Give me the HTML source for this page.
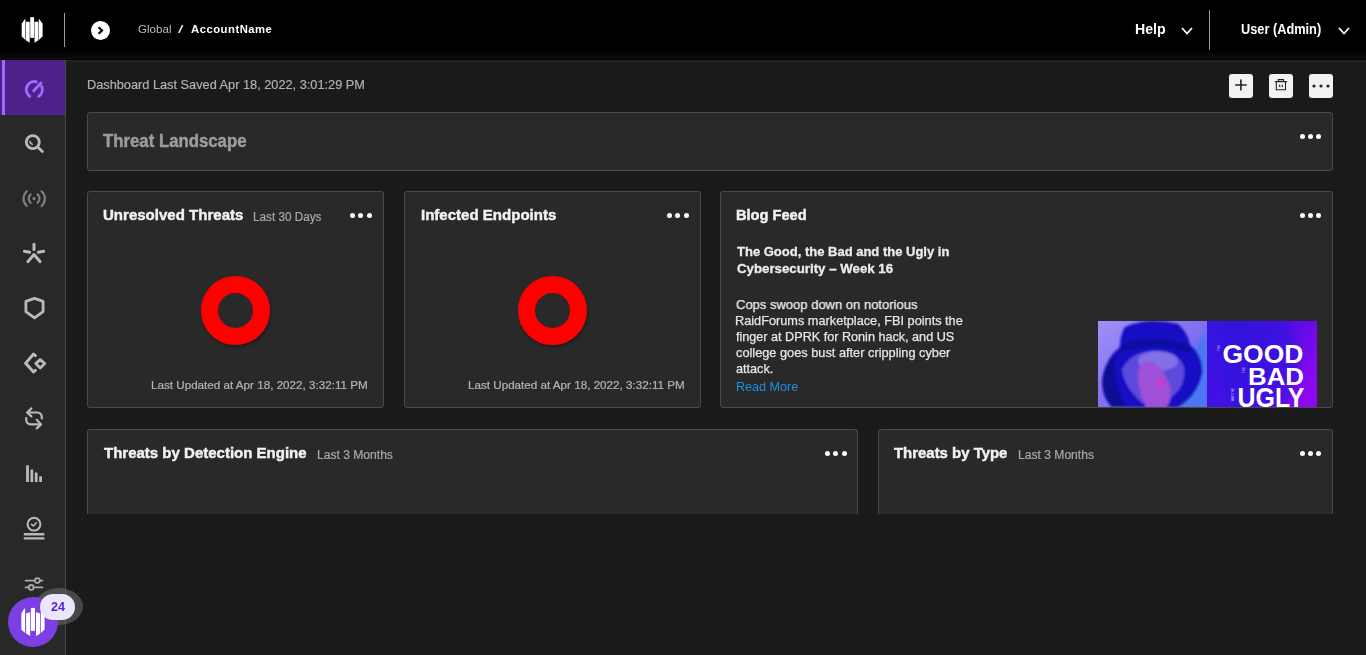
<!DOCTYPE html>
<html><head><meta charset="utf-8">
<style>
*{margin:0;padding:0;box-sizing:border-box}
html,body{width:1366px;height:655px;overflow:hidden;background:#1a1a1a;font-family:"Liberation Sans",sans-serif}
.a{position:absolute}
.t{position:absolute;white-space:nowrap;line-height:1}
#hdr{left:0;top:0;width:1366px;height:60px;background:linear-gradient(#000 0,#000 51px,#0c0c0c 58.5px,#000 59px,#000 60px)}
#side{left:0;top:60px;width:66px;height:595px;background:#282828;border-right:1px solid #4a4a4a}
#act{left:0;top:60px;width:65px;height:55px;background:#4e2189}
#stripe{left:2px;top:60px;width:3px;height:55px;background:#9b6cff}
.card{position:absolute;background:#292929;border:1px solid #4a4a4a;border-radius:3px}
.dots{position:absolute;width:22px;height:6px}
.dots i{position:absolute;top:0;width:5px;height:5px;border-radius:50%;background:#fff}
.dots i:nth-child(1){left:0}.dots i:nth-child(2){left:8.3px}.dots i:nth-child(3){left:16.8px}
.btn{position:absolute;top:74px;width:24px;height:24px;background:#f2f2f2;border-radius:3px}
.h16{font-size:15.5px;font-weight:bold;color:#f2f2f2;-webkit-text-stroke:.45px #f2f2f2}
.sub{font-size:12px;color:#a8a8a8;-webkit-text-stroke:.2px #a8a8a8}
.donut{position:absolute;width:69px;height:69px;border-radius:50%;border:17px solid #ff0000;box-shadow:1px 2px 3px rgba(0,0,0,.35)}
.upd{font-size:11px;color:#b4b4b4;-webkit-text-stroke:.2px #b4b4b4}
</style></head><body>
<div id="hdr" class="a"></div>
<!-- logo -->
<svg class="a" style="left:18px;top:14px" width="30" height="32" viewBox="18 14 30 32">
 <g fill="#fff">
  <polygon points="21.7,23.8 25.3,18.4 25.3,39.9 21.7,36.5"/>
  <polygon points="25.8,21.8 29.7,21.8 29.7,42.8 25.8,40.2"/>
  <polygon points="30.2,17.2 34.1,17.2 34.1,37.9 30.2,37.9"/>
  <polygon points="34.5,21.8 38.4,21.8 38.4,40.2 34.5,42.8"/>
  <polygon points="38.8,18.4 42.6,23.8 42.6,36.5 38.8,39.9"/>
 </g>
</svg>
<div class="a" style="left:64px;top:13px;width:1px;height:34px;background:#9a9a9a"></div>
<div class="a" style="left:91px;top:21px;width:19px;height:19px;border-radius:50%;background:#fff"></div>
<svg class="a" style="left:91px;top:21px" width="19" height="19" viewBox="0 0 19 19"><polyline points="7.6,6.2 11,9.5 7.6,12.8" fill="none" stroke="#000" stroke-width="2.2"/></svg>
<div class="t" id="tGlobal" style="left:137.5px;top:23.8px;font-size:11px;color:#bcbcbc;transform:scaleX(1.054);transform-origin:0 0">Global</div>
<svg class="a" style="left:176px;top:22px" width="10" height="14" viewBox="0 0 10 14"><path d="M6.6 3 L2.8 11" stroke="#fff" stroke-width="1.5"/></svg>
<div class="t" id="tAcct" style="left:190.5px;top:23.8px;font-size:11px;color:#fff;font-weight:bold;letter-spacing:.5px;transform:scaleX(1.024);transform-origin:0 0">AccountName</div>
<div class="t" id="tHelp" style="left:1134.5px;top:21.0px;font-size:15px;color:#fff;font-weight:bold;transform:scaleX(0.940);transform-origin:0 0">Help</div>
<svg class="a" style="left:1180px;top:25px" width="14" height="12" viewBox="0 0 14 12"><polyline points="2,3 7,8.5 12,3" fill="none" stroke="#fff" stroke-width="1.8"/></svg>
<div class="a" style="left:1209px;top:10px;width:1px;height:40px;background:#9a9a9a"></div>
<div class="t" id="tUser" style="left:1241.0px;top:20.9px;font-size:15px;color:#fff;font-weight:bold;transform:scaleX(0.851);transform-origin:0 0">User (Admin)</div>
<svg class="a" style="left:1337px;top:25px" width="14" height="12" viewBox="0 0 14 12"><polyline points="2,3 7,8.5 12,3" fill="none" stroke="#fff" stroke-width="1.8"/></svg>

<div class="a" style="left:66px;top:60px;width:1300px;height:3px;background:linear-gradient(#252525,#1a1a1a)"></div>
<!-- sidebar -->
<div id="side" class="a"></div>
<div id="act" class="a"></div>
<div id="stripe" class="a"></div>


<!-- sidebar icons -->
<svg class="a" style="left:18px;top:72px" width="32" height="32" viewBox="0 0 32 32" fill="none" stroke="#9a6cff" stroke-width="3" stroke-linecap="round">
 <path d="M11.71 24.15 A 8.0 8.0 0 0 1 18.24 9.84"/>
 <path d="M23.72 14.60 A 8.0 8.0 0 0 1 20.89 24.15"/>
 <path d="M15.8 18.8 L23 11"/>
</svg>
<svg class="a" style="left:18px;top:127px" width="32" height="32" viewBox="0 0 32 32" fill="none" stroke="#bababa" stroke-width="2.8" stroke-linecap="round">
 <circle cx="14.8" cy="15.1" r="6.5"/>
 <path d="M20.2 20.4 L24.4 24.4"/>
 <path d="M12 14.6 Q12.4 16.4 14.2 17.2" stroke-width="1.6"/>
</svg>
<svg class="a" style="left:18px;top:182px" width="32" height="32" viewBox="0 0 32 32" fill="none" stroke="#7e7e7e" stroke-width="2.2" stroke-linecap="round">
 <path d="M8.8 9.2 A 10 10 0 0 0 8.8 24"/>
 <path d="M23.6 9.2 A 10 10 0 0 1 23.6 24"/>
 <path d="M12.6 12.4 A 5.6 5.6 0 0 0 12.6 20.8"/>
 <path d="M19.6 12.4 A 5.6 5.6 0 0 1 19.6 20.8"/>
 <circle cx="16" cy="16.6" r="1.6" fill="#7e7e7e" stroke="none"/>
</svg>
<svg class="a" style="left:18px;top:237px" width="32" height="32" viewBox="0 0 32 32" fill="none" stroke="#bababa" stroke-width="3" stroke-linecap="round" stroke-linejoin="round">
 <path d="M16 7.2 V12.4"/>
 <path d="M6.4 14.2 L11.6 15.2"/>
 <path d="M25.6 14.2 L20.4 15.2"/>
 <path d="M10 24.6 L16 17.6 L22 24.6"/>
</svg>
<svg class="a" style="left:18px;top:292px" width="32" height="32" viewBox="0 0 32 32" fill="none" stroke="#bababa" stroke-width="2.8" stroke-linejoin="round">
 <path d="M16.5 6.4 L25.1 9.4 V19.6 L16.5 25.8 L7.9 19.6 V9.4 Z"/>
</svg>
<svg class="a" style="left:18px;top:347px" width="32" height="32" viewBox="0 0 32 32" fill="none" stroke="#bababa" stroke-width="3" stroke-linejoin="round" stroke-linecap="round">
 <path d="M17.4 8.6 L15.6 7 L7.6 16.2 L15.6 25 L17.4 23.4"/>
 <path d="M22.2 12.6 L26.8 16.6 L22.2 21 L17.8 16.6 Z" stroke-width="2.8"/>
</svg>
<svg class="a" style="left:18px;top:402px" width="32" height="32" viewBox="0 0 32 32" fill="none" stroke="#bababa" stroke-width="2.2" stroke-linecap="round" stroke-linejoin="round">
 <path d="M13.4 6.4 L9.2 10.6 L13.4 14.4"/>
 <path d="M9.6 10.5 H19.4 A 4.6 4.6 0 0 1 23.8 15 V16.4"/>
 <path d="M18.8 17.8 L23 22.4 L18.8 26.4"/>
 <path d="M22.6 22.4 H12.6 A 4.6 4.6 0 0 1 8.2 17.8 V16"/>
</svg>
<svg class="a" style="left:18px;top:457px" width="32" height="32" viewBox="0 0 32 32" fill="#bababa">
 <rect x="8.1" y="8.2" width="2.8" height="16.8" rx=".6"/>
 <rect x="12.4" y="12.4" width="2.8" height="12.6" rx=".6"/>
 <rect x="16.8" y="15.4" width="2.8" height="9.6" rx=".6"/>
 <rect x="21.2" y="19.2" width="2.8" height="5.8" rx=".6"/>
</svg>
<svg class="a" style="left:18px;top:512px" width="32" height="32" viewBox="0 0 32 32" fill="none" stroke="#bababa" stroke-width="2" stroke-linecap="round">
 <circle cx="16" cy="12.2" r="6.4"/>
 <path d="M13.6 12.4 L15.4 14 L18.4 10.8" stroke-width="1.6"/>
 <path d="M6.8 22.3 H25.4 M6.8 26.4 H25.4" stroke-width="2.4"/>
</svg>
<svg class="a" style="left:18px;top:564.5px" width="32" height="32" viewBox="0 0 32 32" fill="none" stroke="#a9a9a9" stroke-width="1.8" stroke-linecap="round">
 <path d="M7.6 15.6 H24.4 M7.6 22.4 H24.4"/>
 <circle cx="19.4" cy="15.6" r="2.4" fill="#282828"/>
 <circle cx="13.2" cy="22.4" r="2.4" fill="#282828"/>
</svg>
<!-- content -->
<div class="t" id="tSaved" style="left:86.5px;top:78.3px;font-size:13px;color:#b0b0b0;-webkit-text-stroke:.2px #b0b0b0;transform:scaleX(0.981);transform-origin:0 0">Dashboard Last Saved Apr 18, 2022, 3:01:29 PM</div>
<div class="btn" style="left:1229px"></div>
<svg class="a" style="left:1229px;top:74px" width="24" height="24" viewBox="0 0 24 24"><path d="M6.2 11h11.5M11.9 5.6v11" stroke="#222" stroke-width="1.6" fill="none"/></svg>
<div class="btn" style="left:1269px"></div>
<svg class="a" style="left:1269px;top:74px" width="24" height="24" viewBox="0 0 24 24"><g fill="none" stroke="#222" stroke-width="1.05"><path d="M5.9 7.6h12M9.3 7.6V5.6h5.2v2M7.3 7.6v8.1h9.2V7.6"/></g><g fill="#222"><ellipse cx="10.7" cy="11.9" rx=".6" ry="1.3"/><ellipse cx="13.3" cy="11.9" rx=".6" ry="1.3"/></g></svg>
<div class="btn" style="left:1309px"></div>
<svg class="a" style="left:1309px;top:74px" width="24" height="24" viewBox="0 0 24 24"><g fill="#222"><circle cx="5" cy="12" r="1.6"/><circle cx="12" cy="12" r="1.6"/><circle cx="19" cy="12" r="1.6"/></g></svg>

<div class="card" style="left:87px;top:112px;width:1246px;height:59px"></div>
<div class="t" id="tTL" style="left:103.2px;top:132.9px;font-size:17.5px;font-weight:bold;color:#9c9c9c;-webkit-text-stroke:.45px #9c9c9c;transform:scaleX(0.958);transform-origin:0 0">Threat Landscape</div>
<div class="dots" style="left:1299.6px;top:133.8px"><i></i><i></i><i></i></div>

<div class="card" style="left:87px;top:191px;width:297px;height:217px"></div>
<div class="t h16" id="tUT" style="left:103.0px;top:206.7px;transform:scaleX(0.970);transform-origin:0 0">Unresolved Threats</div>
<div class="t sub" id="tL30" style="left:253.0px;top:210.8px;transform:scaleX(0.976);transform-origin:0 0">Last 30 Days</div>
<div class="dots" style="left:350.1px;top:212.7px"><i></i><i></i><i></i></div>
<div class="donut" style="left:201px;top:276px"></div>
<div class="t upd" id="tUpd1" style="left:151.0px;top:379.8px;transform:scaleX(1.059);transform-origin:0 0">Last Updated at Apr 18, 2022, 3:32:11 PM</div>

<div class="card" style="left:404px;top:191px;width:297px;height:217px"></div>
<div class="t h16" id="tIE" style="left:420.5px;top:206.7px;transform:scaleX(0.970);transform-origin:0 0">Infected Endpoints</div>
<div class="dots" style="left:667.1px;top:212.7px"><i></i><i></i><i></i></div>
<div class="donut" style="left:518px;top:276px"></div>
<div class="t upd" id="tUpd2" style="left:468.0px;top:379.8px;transform:scaleX(1.059);transform-origin:0 0">Last Updated at Apr 18, 2022, 3:32:11 PM</div>

<div class="card" style="left:720px;top:191px;width:613px;height:217px;overflow:hidden"></div>
<div class="t h16" id="tBF" style="left:736.0px;top:206.7px;transform:scaleX(0.943);transform-origin:0 0">Blog Feed</div>
<div class="dots" style="left:1299.6px;top:212.7px"><i></i><i></i><i></i></div>
<div class="t" id="tBT1" style="left:736.5px;top:245.0px;font-size:13.2px;font-weight:bold;color:#ececec;-webkit-text-stroke:.3px #ececec;transform:scaleX(0.986);transform-origin:0 0">The Good, the Bad and the Ugly in</div>
<div class="t" id="tBT2" style="left:736.5px;top:262.3px;font-size:13.2px;font-weight:bold;color:#ececec;-webkit-text-stroke:.3px #ececec;transform:scaleX(1.006);transform-origin:0 0">Cybersecurity – Week 16</div>
<div class="t" id="tBB1" style="left:736.0px;top:298.0px;font-size:13px;color:#e6e6e6;-webkit-text-stroke:.25px #e6e6e6">Cops swoop down on notorious</div>
<div class="t" id="tBB2" style="left:735.0px;top:314.0px;font-size:13px;color:#e6e6e6;-webkit-text-stroke:.25px #e6e6e6;transform:scaleX(0.979);transform-origin:0 0">RaidForums marketplace, FBI points the</div>
<div class="t" id="tBB3" style="left:736.0px;top:330.0px;font-size:13px;color:#e6e6e6;-webkit-text-stroke:.25px #e6e6e6;transform:scaleX(0.971);transform-origin:0 0">finger at DPRK for Ronin hack, and US</div>
<div class="t" id="tBB4" style="left:736.0px;top:346.0px;font-size:13px;color:#e6e6e6;-webkit-text-stroke:.25px #e6e6e6;transform:scaleX(0.982);transform-origin:0 0">college goes bust after crippling cyber</div>
<div class="t" id="tBB5" style="left:736.0px;top:362.0px;font-size:13px;color:#e6e6e6;-webkit-text-stroke:.25px #e6e6e6;transform:scaleX(0.974);transform-origin:0 0">attack.</div>
<div class="t" id="tRM" style="left:735.8px;top:380.0px;font-size:13px;color:#1a8fe6;transform:scaleX(0.968);transform-origin:0 0">Read More</div>
<svg class="a" id="blogimg" style="left:1098px;top:321px" width="219" height="86" viewBox="0 0 219 86">
 <defs>
  <linearGradient id="gl" x1="0" y1="0" x2="1" y2="1"><stop offset="0" stop-color="#a090f6"/><stop offset=".5" stop-color="#8270f2"/><stop offset="1" stop-color="#6a5aee"/></linearGradient>
  <linearGradient id="gr" x1="0" y1="0.2" x2="1" y2="0.6"><stop offset="0" stop-color="#3414de"/><stop offset=".55" stop-color="#4a0ee6"/><stop offset="1" stop-color="#8c08f0"/></linearGradient>
  <filter id="bl" x="-20%" y="-20%" width="140%" height="140%"><feGaussianBlur stdDeviation="1.1"/></filter>
  <filter id="bl2" x="-20%" y="-20%" width="140%" height="140%"><feGaussianBlur stdDeviation="2.2"/></filter>
 </defs>
 <rect x="0" y="0" width="110" height="86" fill="url(#gl)"/>
 <polygon points="74,86 88,40 109,8 109,86" fill="#4a78f0" filter="url(#bl2)"/>
 <g filter="url(#bl)">
  <path d="M27 6 Q50 -4 80 3 Q90 12 92 24 Q104 34 104 52 Q100 70 88 80 L80 86 L14 86 Q2 74 5 54 Q9 36 22 26 Q22 14 27 6 Z" fill="#160cc4"/>
  <path d="M14 86 Q2 74 5 54 Q9 40 18 34 Q14 62 28 86 Z" fill="#0c0896"/>
  <path d="M22 24 Q50 12 92 24 Q94 30 90 32 Q54 20 22 32 Z" fill="#0c0896" opacity=".7"/>
  <path d="M24 48 Q34 30 56 30 Q80 30 86 46 Q88 60 80 70 L70 80 L44 82 Q26 66 24 48 Z" fill="#6a56e0" opacity=".85"/>
  <ellipse cx="60" cy="40" rx="20" ry="10" fill="#9a88ee" opacity=".6"/>
  <path d="M40 50 Q46 36 56 42 Q68 50 72 66 Q74 82 68 86 L48 86 Q40 72 40 50 Z" fill="#a050d8"/>
  <ellipse cx="62" cy="62" rx="5" ry="4" fill="#c040c8"/>
 </g>
 <rect x="109" y="0" width="110" height="86" fill="url(#gr)"/>
 <path d="M128 0 Q160 -4 192 8 Q206 30 200 58 L186 86 L136 86 Q120 60 126 30 Z" fill="#2a12d8" opacity=".5" filter="url(#bl2)"/>
 <g fill="#fff" font-family="Liberation Sans, sans-serif" font-weight="bold">
  <text x="124.5" y="42.2" font-size="26.5" textLength="81" lengthAdjust="spacingAndGlyphs">GOOD</text>
  <text x="150" y="63.8" font-size="24" textLength="56" lengthAdjust="spacingAndGlyphs">BAD</text>
  <text x="139.5" y="85.5" font-size="27" textLength="67" lengthAdjust="spacingAndGlyphs">UGLY</text>
 </g>
 <g fill="#d8c8ff" font-family="Liberation Sans, sans-serif" font-size="3">
  <text transform="translate(122,30) rotate(-90)">THE</text>
  <text transform="translate(147,52) rotate(-90)">THE</text>
  <text transform="translate(136,80) rotate(-90)">AND THE</text>
 </g>
</svg>

<div class="card" style="left:87px;top:429px;width:771px;height:85px;border-bottom:none;border-radius:3px 3px 0 0"></div>
<div class="t h16" id="tTDE" style="left:103.5px;top:444.9px;transform:scaleX(0.968);transform-origin:0 0">Threats by Detection Engine</div>
<div class="t sub" id="tL3a" style="left:317.0px;top:448.9px;transform:scaleX(1.007);transform-origin:0 0">Last 3 Months</div>
<div class="dots" style="left:824.9px;top:450.7px"><i></i><i></i><i></i></div>

<div class="card" style="left:878px;top:429px;width:455px;height:85px;border-bottom:none;border-radius:3px 3px 0 0"></div>
<div class="t h16" id="tTBT" style="left:894.0px;top:444.9px;transform:scaleX(0.963);transform-origin:0 0">Threats by Type</div>
<div class="t sub" id="tL3b" style="left:1017.5px;top:448.9px;transform:scaleX(1.008);transform-origin:0 0">Last 3 Months</div>
<div class="dots" style="left:1299.6px;top:450.7px"><i></i><i></i><i></i></div>
<!-- bottom assistant -->
<div class="a" style="left:35px;top:588px;width:48px;height:37px;border-radius:50%;background:rgba(110,110,110,.55)"></div>
<div class="a" style="left:8px;top:597px;width:50px;height:50px;border-radius:50%;background:#7b3fe4"></div>
<svg class="a" style="left:8px;top:597px" width="50" height="50" viewBox="0 0 50 50">
 <g fill="#fff">
  <path d="M13.3 17 Q14.6 12.6 17.1 10.9 V36 L13.3 32.6 Z"/>
  <path d="M18.1 16.4 Q20 15.4 22.2 15.2 V39.1 L18.1 36.6 Z"/>
  <rect x="22.9" y="10.9" width="4.1" height="23"/>
  <path d="M28 15.2 Q30.2 15.4 32.2 16.4 V36.6 L28 39.1 Z"/>
  <path d="M32.9 10.9 Q35.4 12.6 36.6 17 V32.6 L32.9 36 Z"/>
 </g>
</svg>
<div class="a" style="left:40px;top:594px;width:35px;height:26px;border-radius:13px;background:#ece6fa"></div>
<div class="t" id="tBadge" style="left:50.7px;top:600.0px;font-size:13.5px;font-weight:bold;color:#5b20d6;transform:scaleX(0.933);transform-origin:0 0">24</div>

</body></html>
